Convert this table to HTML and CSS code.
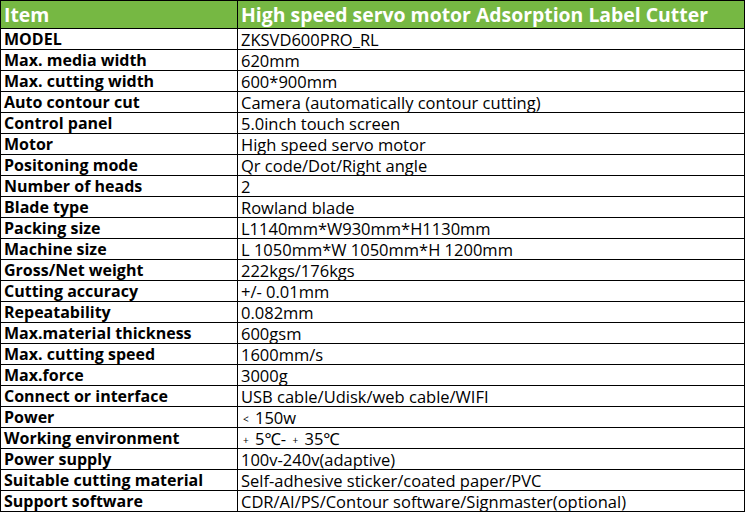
FILE: index.html
```html
<!DOCTYPE html>
<html>
<head>
<meta charset="utf-8">
<link rel="stylesheet" href="styles.css">
</head>
<body>
<table class="spec">
<colgroup><col class="c1"><col class="c2"></colgroup>
<thead>
<tr class="head"><th>Item</th><th>High speed servo motor Adsorption Label Cutter</th></tr>
</thead>
<tbody>
<tr><th>MODEL</th><td>ZKSVD600PRO_RL</td></tr>
<tr><th>Max. media width</th><td>620mm</td></tr>
<tr><th>Max. cutting width</th><td>600*900mm</td></tr>
<tr><th>Auto contour cut</th><td>Camera (automatically contour cutting)</td></tr>
<tr><th>Control panel</th><td>5.0inch touch screen</td></tr>
<tr><th>Motor</th><td>High speed servo motor</td></tr>
<tr><th>Positoning mode</th><td>Qr code/Dot/Right angle</td></tr>
<tr><th>Number of heads</th><td>2</td></tr>
<tr><th>Blade type</th><td>Rowland blade</td></tr>
<tr><th>Packing size</th><td>L1140mm*W930mm*H1130mm</td></tr>
<tr><th>Machine size</th><td>L 1050mm*W 1050mm*H 1200mm</td></tr>
<tr><th>Gross/Net weight</th><td>222kgs/176kgs</td></tr>
<tr><th>Cutting accuracy</th><td>+/- 0.01mm</td></tr>
<tr><th>Repeatability</th><td>0.082mm</td></tr>
<tr><th>Max.material thickness</th><td>600gsm</td></tr>
<tr><th>Max. cutting speed</th><td>1600mm/s</td></tr>
<tr><th>Max.force</th><td>3000g</td></tr>
<tr><th>Connect or interface</th><td>USB cable/Udisk/web cable/WIFI</td></tr>
<tr><th>Power</th><td><span class="sym">&lt;</span> 150w</td></tr>
<tr><th>Working environment</th><td><span class="sym">+</span> 5℃- <span class="sym">+</span> 35℃</td></tr>
<tr><th>Power supply</th><td>100v-240v(adaptive)</td></tr>
<tr><th>Suitable cutting material</th><td>Self-adhesive sticker/coated paper/PVC</td></tr>
<tr><th>Support software</th><td>CDR/AI/PS/Contour software/Signmaster(optional)</td></tr>
</tbody>
</table>
</body>
</html>
```
FILE: styles.css
```css
html, body {
  margin: 0;
  padding: 0;
  background: #ffffff;
}
.spec {
  border-collapse: collapse;
  table-layout: fixed;
  width: 744px;
  font-family: "Open Sans", "Noto Sans", sans-serif;
  font-size: 16.5px;
  color: #000;
}
.c1 { width: 237px; }
.c2 { width: 507px; }
.spec tbody tr { height: 21px; }
.spec th, .spec td {
  border: 1px solid #000;
  padding: 0 0 0 3px;
  height: 20px;
  line-height: 17px;
  text-align: left;
  white-space: nowrap;
  overflow: hidden;
}
.spec tbody th {
  font-weight: 700;
  font-size: 16px;
}
.spec td {
  font-weight: 400;
}
.head { height: 28px; }
.head th {
  background: #76b843;
  color: #ffffff;
  font-size: 19.4px;
  font-weight: 700;
  height: 27px;
  line-height: 24px;
}
.sym {
  font-size: 10px;
  line-height: 10px;
  vertical-align: 1px;
  padding: 0 2px;
}
```
